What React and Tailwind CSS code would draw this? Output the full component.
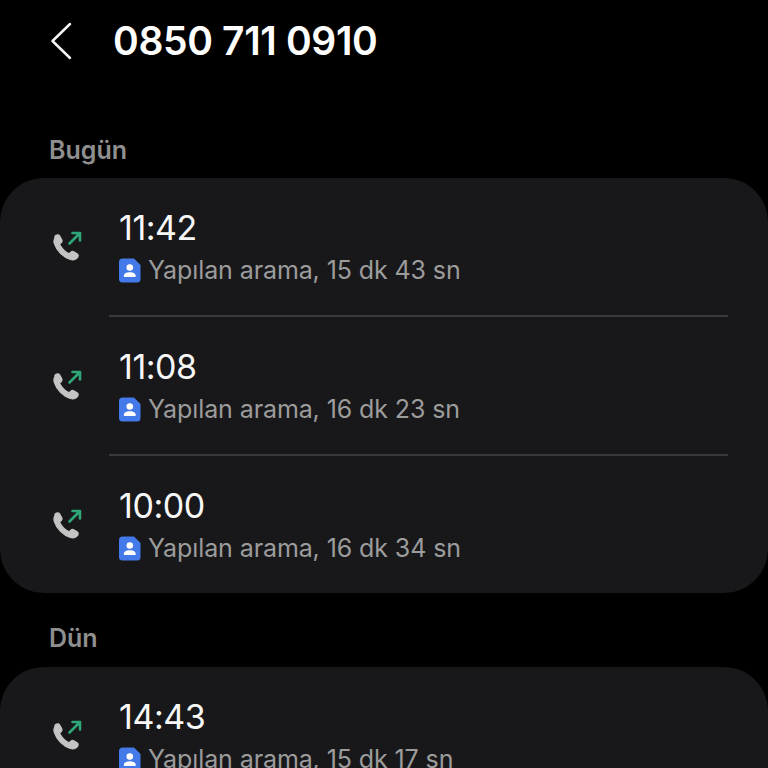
function BackIcon() {
  return (
    <svg width="24" height="40" viewBox="0 0 24 40" fill="none" className="shrink-0">
      <path d="M21 3L3.500 20L21 37" stroke="#f4f4f4" strokeWidth="2.500" strokeLinecap="round" strokeLinejoin="round" />
    </svg>
  );
}

function CallIcon() {
  return (
    <svg width="32" height="32" viewBox="0 0 32 32" fill="none" className="shrink-0">
      {/* handset */}
      <path
        d="M2.800 6.300c1.500-1.700 4-1.900 4.900-.3l2.100 3.800c.5 1 .3 1.900-.5 2.700l-1.100 1.100c-.4.4-.5.900-.2 1.500.9 1.700 2.100 3.400 3.600 4.900 1.500 1.500 3 2.600 4.700 3.400.6.300 1.100.2 1.500-.2l1.100-1.100c.8-.8 1.800-.9 2.800-.4l3.400 2c1.500.9 1.400 2.900-.1 4.400-1.800 1.800-4.100 2.200-6.700 1.400-3.500-1.100-6.800-3.200-9.800-6.200-3-3-5.100-6.300-6.200-9.900-.8-2.700-.2-5.200 1.500-7.100z"
        fill="#c4c4c4"
        stroke="#c4c4c4"
        strokeWidth="1.200"
        strokeLinejoin="round"
      />
      {/* outgoing arrow */}
      <path d="M17.500 13.500L27.500 3.500M20.500 3H28V10.500" stroke="#2fa678" strokeWidth="2.600" strokeLinecap="round" strokeLinejoin="round" />
    </svg>
  );
}

function ContactBadge() {
  return (
    <svg width="22" height="25" viewBox="0 0 22 25" className="shrink-0">
      <path d="M3.500 0.500H15L21.500 7V21a3.500 3.500 0 0 1-3.500 3.500H3.500A3.500 3.500 0 0 1 0 21V4A3.500 3.500 0 0 1 3.500 0.500z" fill="#4379e8" />
      <circle cx="10.800" cy="9.500" r="3.300" fill="#fff" />
      <path d="M4.800 18.200c0-2.700 2.500-4 6-4s6 1.300 6 4c0 .5-.3.800-.8.800H5.600c-.5 0-.8-.3-.8-.8z" fill="#fff" />
    </svg>
  );
}

function CallRow({ time, detail, divider }) {
  return (
    <div className="flex items-start pl-[52px]">
      <div className="pt-[52px]">
        <CallIcon />
      </div>
      <div className={`ml-[25px] flex-1 mr-[40px] pt-[28px] h-[139px] ${divider ? 'border-b-2 border-[#39393a]' : ''}`}>
        <div className="pl-[10px] text-[34px] leading-[44px] tracking-[-0.45px] text-[#f7f7f7]">{time}</div>
        <div className="pl-[10px] mt-[4px] flex items-center gap-[7px]">
          <ContactBadge />
          <span className="text-[25px] leading-[32px] tracking-[-0.1px] text-[#9c9c9c]">{detail}</span>
        </div>
      </div>
    </div>
  );
}

const today = [
  { time: '11:42', detail: 'Yapılan arama, 15 dk 43 sn' },
  { time: '11:08', detail: 'Yapılan arama, 16 dk 23 sn' },
  { time: '10:00', detail: 'Yapılan arama, 16 dk 34 sn' },
];

export default function App() {
  return (
    <div className="h-[768px] w-[768px] overflow-hidden bg-black font-['Inter',sans-serif]">
      <div className="flex items-center h-[82px] pl-[49px]">
        <BackIcon />
        <h1 className="ml-[40px] text-[39px] tracking-[-0.35px] font-semibold text-white">0850 711 0910</h1>
      </div>

      <div className="pl-[49px] pt-[50px] h-[96px] text-[25px] leading-[36px] font-semibold text-[#8f8f8f]">Bugün</div>
      <div className="rounded-[44px] bg-[#18181a] h-[415px]">
        {today.map((call, i) => (
          <CallRow key={call.time} time={call.time} detail={call.detail} divider={i < 2} />
        ))}
      </div>

      <div className="pl-[49px] pt-[27px] h-[74px] text-[25px] leading-[36px] font-semibold text-[#8f8f8f]">Dün</div>
      <div className="rounded-[44px] bg-[#18181a] h-[200px]">
        <CallRow time="14:43" detail="Yapılan arama, 15 dk 17 sn" />
      </div>
    </div>
  );
}
